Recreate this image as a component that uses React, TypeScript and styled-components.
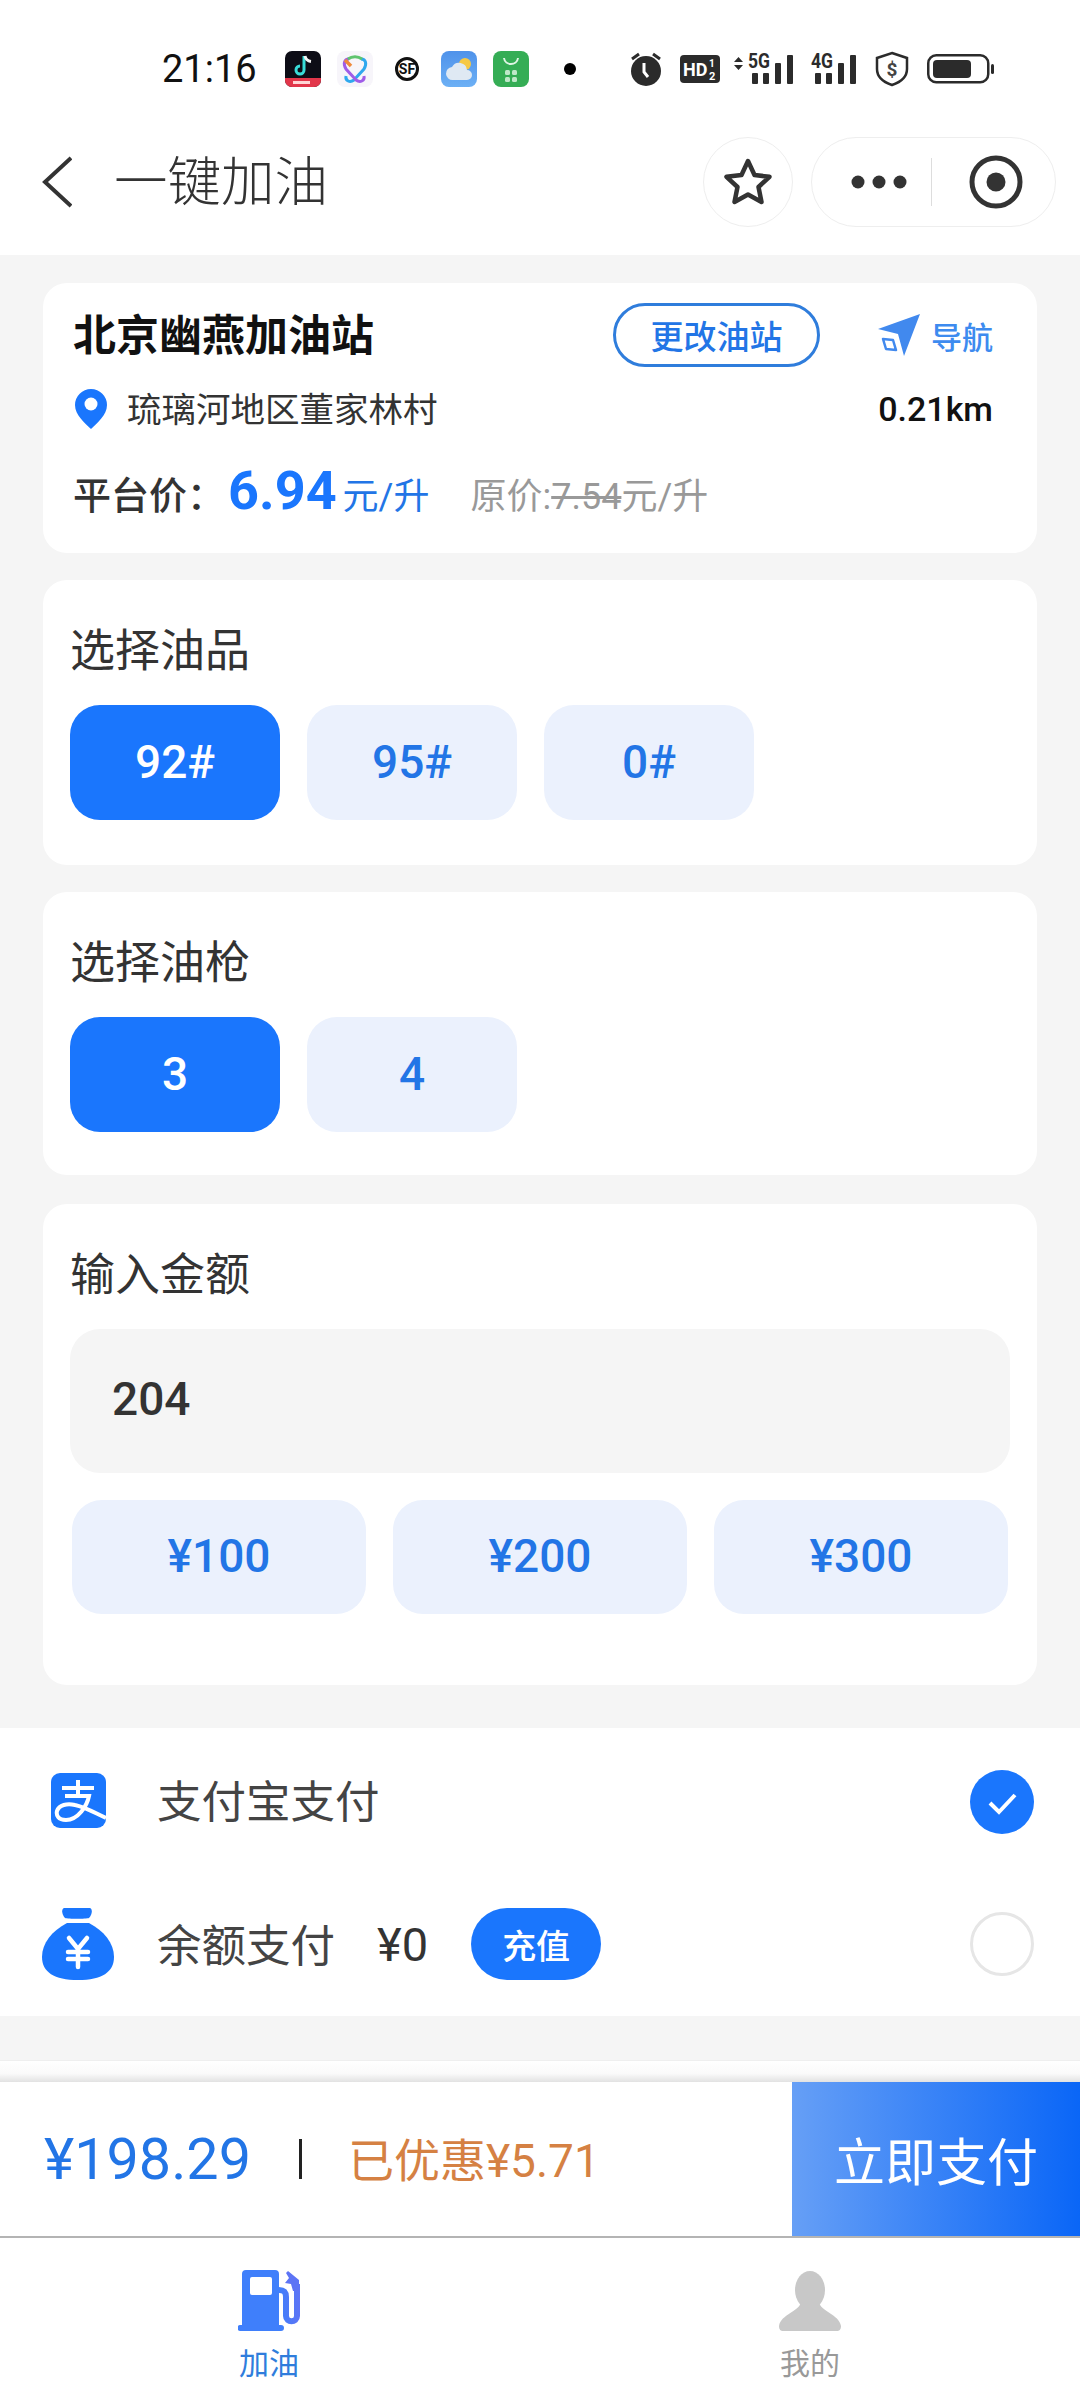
import React from "react";
import styled, { createGlobalStyle } from "styled-components";

const BLUE = "#1a76fd";
const TEXT_BLUE = "#2275e6";
const CJK = `Roboto, "Noto Sans CJK SC", sans-serif`;

const GlobalStyle = createGlobalStyle`
  html, body {
    margin: 0;
    padding: 0;
    background: #fff;
  }
  * {
    box-sizing: border-box;
  }
`;

const Page = styled.div`
  width: 1080px;
  height: 2400px;
  overflow: hidden;
  background: #fff;
  font-family: ${CJK};
  color: #333;
`;

const StatusBar = styled.div`
  height: 90px;
  padding: 54px 85px 6px 162px;
  display: flex;
  align-items: center;
`;

const Time = styled.span`
  width: 123px;
  font-size: 38px;
  line-height: 1;
  color: #111;
`;

const AppIcons = styled.div`
  display: flex;
  gap: 16px;
`;

const StatusIcons = styled.div`
  display: flex;
  align-items: center;
  margin-left: auto;
`;

const StatusIcon = styled.svg<{ $gap?: number }>`
  display: block;
  flex: none;
  margin-left: ${(p) => p.$gap ?? 0}px;
`;

const NavBar = styled.div`
  height: 165px;
  display: flex;
  align-items: center;
  padding: 18px 24px 0 42px;
`;

const NavTitle = styled.div`
  margin-left: 42px;
  padding-top: 2px;
  font-size: 53.500px;
  font-weight: 300;
  color: #333;
  line-height: 1;
`;

const NavActions = styled.div`
  margin-left: auto;
  display: flex;
  gap: 18px;
`;

const StarButton = styled.div`
  width: 90px;
  height: 90px;
  border: 1px solid #eee;
  border-radius: 50%;
  display: flex;
  align-items: center;
  justify-content: center;
`;

const Capsule = styled.div`
  width: 245px;
  height: 90px;
  border: 1px solid #eee;
  border-radius: 45px;
  display: flex;
  align-items: center;
  padding-left: 38px;
`;

const CapsuleLine = styled.div`
  width: 1px;
  height: 48px;
  background: #ddd;
  margin-left: 23px;
  margin-right: 37px;
`;

const Content = styled.div`
  background: #f5f5f5;
  padding: 28px 43px 43px;
  display: flex;
  flex-direction: column;
`;

const Card = styled.div<{ $height: number; $gapBelow?: number }>`
  height: ${(p) => p.$height}px;
  margin-bottom: ${(p) => p.$gapBelow ?? 0}px;
  background: #fff;
  border-radius: 24px;
`;

const StationCard = styled(Card)`
  padding: 20px 44px 0 30px;
`;

const NameRow = styled.div`
  display: flex;
  align-items: center;
  height: 64px;
`;

const StationName = styled.div`
  font-size: 43px;
  font-weight: 700;
  color: #111;
  padding-bottom: 6px;
`;

const ChangeButton = styled.div`
  margin-left: auto;
  width: 207px;
  height: 64px;
  border: 3px solid #2f7ddc;
  border-radius: 32px;
  color: ${TEXT_BLUE};
  font-size: 33px;
  font-weight: 500;
  display: flex;
  align-items: center;
  justify-content: center;
`;

const NavLink = styled.div`
  margin-left: 58px;
  display: flex;
  align-items: center;
  gap: 11px;
  color: #3d8bef;
  font-size: 31px;
  font-weight: 500;
`;

const AddressRow = styled.div`
  display: flex;
  align-items: center;
  height: 44px;
  margin-top: 20px;
  padding-left: 2px;
`;

const Address = styled.div`
  margin-left: 20px;
  font-size: 34.500px;
  color: #333;
  padding-bottom: 4px;
`;

const Distance = styled.div`
  margin-left: auto;
  font-size: 34px;
  font-weight: 500;
  color: #111;
`;

const PriceRow = styled.div`
  display: flex;
  align-items: baseline;
  margin-top: 28px;
  height: 60px;
`;

const PriceLabel = styled.span`
  font-size: 38px;
  font-weight: 500;
  color: #333;
  width: 155px;
`;

const PriceValue = styled.span`
  font-size: 54px;
  font-weight: 700;
  color: ${BLUE};
`;

const PriceUnit = styled.span`
  margin-left: 6px;
  font-size: 36px;
  color: ${TEXT_BLUE};
`;

const OriginalPrice = styled.span`
  margin-left: 41px;
  font-size: 36px;
  color: #999;
`;

const Struck = styled.span`
  text-decoration: line-through;
`;

const SectionCard = styled(Card)`
  padding: 44px 27px 0;
`;

const SectionTitle = styled.div`
  height: 56px;
  line-height: 56px;
  font-size: 45px;
  color: #333;
`;

const ChipRow = styled.div`
  margin-top: 25px;
  display: flex;
  gap: 27px;
`;

const Chip = styled.div<{ $active?: boolean }>`
  width: 210px;
  height: 115px;
  border-radius: 30px;
  background: ${(p) => (p.$active ? BLUE : "#ebf1fd")};
  color: ${(p) => (p.$active ? "#fff" : TEXT_BLUE)};
  font-size: 46px;
  font-weight: 500;
  padding-bottom: 2px;
  display: flex;
  align-items: center;
  justify-content: center;
`;

const AmountInput = styled.div`
  margin-top: 25px;
  height: 144px;
  background: #f5f5f5;
  border-radius: 30px;
  padding: 0 0 5px 42px;
  display: flex;
  align-items: center;
  font-size: 46px;
  font-weight: 500;
  color: #333;
`;

const AmountRow = styled.div`
  margin-top: 27px;
  padding: 0 2px;
  display: flex;
  gap: 27px;
`;

const AmountChip = styled(Chip)`
  width: 294px;
  height: 114px;
  font-size: 46px;
`;

const Payments = styled.div`
  height: 288px;
  background: #fff;
  padding: 0 46px 0 42px;
`;

const PayRow = styled.div<{ $height: number }>`
  height: ${(p) => p.$height}px;
  display: flex;
  align-items: center;
`;

const PayIconSlot = styled.div`
  width: 72px;
  display: flex;
  justify-content: center;
`;

const PayName = styled.div`
  margin-left: 43px;
  font-size: 44.500px;
  color: #444;
  padding-bottom: 4px;
`;

const Balance = styled.div`
  margin-left: 42px;
  font-size: 47px;
  color: #333;
`;

const TopUp = styled.div`
  margin-left: 43px;
  width: 130px;
  height: 72px;
  border-radius: 36px;
  background: ${BLUE};
  color: #fff;
  font-size: 34px;
  font-weight: 500;
  display: flex;
  align-items: center;
  justify-content: center;
`;

const RadioSlot = styled.div<{ $shift?: number }>`
  margin-left: auto;
  padding-top: ${(p) => p.$shift ?? 0}px;
`;

const EmptyRadio = styled.div`
  width: 64px;
  height: 64px;
  border-radius: 50%;
  border: 3px solid #e6e6e6;
`;

const GreyGap = styled.div`
  height: 44px;
  background: #f5f5f5;
`;

const ShadowStrip = styled.div`
  height: 22px;
  background: linear-gradient(#fff 0%, #fafafa 60%, #e2e2e2 100%);
  border-top: 1px solid #efefef;
`;

const PayBar = styled.div`
  height: 156px;
  border-bottom: 2px solid #b4b4b4;
  display: flex;
  align-items: center;
  padding-left: 44px;
`;

const Total = styled.div`
  font-size: 57.500px;
  color: ${TEXT_BLUE};
`;

const Divider = styled.div`
  margin-left: 48px;
  width: 3px;
  height: 40px;
  background: #222;
`;

const Discount = styled.div`
  margin-left: 46px;
  font-size: 46px;
  color: #d58143;
  padding-bottom: 4px;
`;

const PayButton = styled.div`
  margin-left: auto;
  align-self: stretch;
  width: 288px;
  background: linear-gradient(90deg, #669ff6, #0a66f7);
  color: #fff;
  font-size: 51px;
  display: flex;
  align-items: center;
  justify-content: center;
`;

const TabBar = styled.div`
  height: 160px;
  display: flex;
  padding: 32px 0 0 0;
`;

const TabItem = styled.div<{ $active?: boolean; $left: number }>`
  margin-left: ${(p) => p.$left}px;
  width: 120px;
  display: flex;
  flex-direction: column;
  align-items: center;
  color: ${(p) => (p.$active ? "#2f7ddc" : "#999")};
  font-size: 30px;
  line-height: 40px;
  gap: 12px;
`;

function AppIconSet() {
  return (
    <AppIcons>
      <svg width="36" height="36" viewBox="0 0 36 36">
        <rect width="36" height="36" rx="7" fill="#0d0d16" />
        <path d="M0 27h36v2a7 7 0 0 1-7 7H7a7 7 0 0 1-7-7z" fill="#e2364a" />
        <path d="M19 5v14a4 4 0 1 1-4-4" fill="none" stroke="#38dcd8" strokeWidth="3" />
        <path d="M20 5c.6 3 2.600 5 6 5.400" fill="none" stroke="#f3f3f3" strokeWidth="3" />
        <rect x="8" y="30" width="17" height="3" fill="#ffd5d5" />
      </svg>
      <svg width="36" height="36" viewBox="0 0 36 36">
        <rect width="36" height="36" rx="8" fill="#f7f5fa" />
        <path d="M24 8c5 0 6 5 3 10L17 29c-4 3-9 1-8-4" fill="none" stroke="#2fa8ee" strokeWidth="3" />
        <path d="M12 8C7 8 6 13 9 18l10 11c4 3 9 1 8-4" fill="none" stroke="#a05ce8" strokeWidth="3" />
        <path d="M11 8c4-3 10-3 14 0" fill="none" stroke="#5fc46e" strokeWidth="3" />
        <path d="M8 9l6 6" stroke="#f08a3c" strokeWidth="3.500" />
      </svg>
      <svg width="36" height="36" viewBox="0 0 36 36">
        <circle cx="18" cy="18" r="10.500" fill="none" stroke="#111" strokeWidth="3" />
        <text x="18" y="23" fontSize="14" fontWeight="700" textAnchor="middle" fill="#111" fontFamily="Roboto">SF</text>
      </svg>
      <svg width="36" height="36" viewBox="0 0 36 36">
        <defs>
          <linearGradient id="sky" x1="0" y1="0" x2="0" y2="1">
            <stop offset="0" stopColor="#4f92ea" />
            <stop offset="1" stopColor="#6cb0f5" />
          </linearGradient>
        </defs>
        <rect width="36" height="36" rx="8" fill="url(#sky)" />
        <circle cx="24" cy="13" r="6" fill="#f6c945" />
        <path d="M12 29a6.500 6.500 0 0 1-1-13 8 8 0 0 1 15 3 5 5 0 0 1 0 10z" fill="#dfe9f3" />
      </svg>
      <svg width="36" height="36" viewBox="0 0 36 36">
        <rect width="36" height="36" rx="8" fill="#35ad55" />
        <path d="M11 7c1 8 13 8 14 0" fill="none" stroke="#dff5e4" strokeWidth="2" />
        <rect x="12" y="19" width="5" height="5" rx="1.500" fill="#bfe8c9" />
        <rect x="19" y="19" width="5" height="5" rx="1.500" fill="#bfe8c9" />
        <rect x="12" y="26" width="5" height="5" rx="1.500" fill="#bfe8c9" />
        <rect x="19" y="26" width="5" height="5" rx="1.500" fill="#bfe8c9" />
      </svg>
      <svg width="36" height="36" viewBox="0 0 36 36">
        <circle cx="25" cy="18" r="6" fill="#000" />
      </svg>
    </AppIcons>
  );
}

function SignalBars({ x }: { x: number }) {
  return (
    <g fill="#2b2b2b">
      <rect x={x} y="20" width="6" height="11" rx="1" />
      <rect x={x + 11} y="20" width="6" height="11" rx="1" />
      <rect x={x + 23} y="10" width="6" height="21" rx="1" />
      <rect x={x + 35} y="2" width="6" height="29" rx="1" />
    </g>
  );
}

function SystemIconSet() {
  return (
    <StatusIcons>
      <StatusIcon width="32" height="34" viewBox="0 0 32 34">
        <circle cx="16" cy="19" r="15" fill="#2b2b2b" />
        <path d="M2 7l7-5M30 7l-7-5" stroke="#2b2b2b" strokeWidth="3" />
        <path d="M14 11v9l4 5" fill="none" stroke="#fff" strokeWidth="3" />
      </StatusIcon>
      <StatusIcon $gap={18} width="40" height="28" viewBox="0 0 40 28">
        <rect width="40" height="28" rx="4" fill="#2b2b2b" />
        <text x="3" y="21" fontSize="18" fontWeight="700" fill="#fff" fontFamily="Roboto">HD</text>
        <text x="29" y="12" fontSize="10" fontWeight="700" fill="#fff" fontFamily="Roboto">1</text>
        <text x="29" y="25" fontSize="11" fontWeight="700" fill="#fff" fontFamily="Roboto">2</text>
      </StatusIcon>
      <StatusIcon $gap={13} width="62" height="44" viewBox="0 -6 62 44">
        <path d="M1 9l4.500-5 4.500 5zM1 12l4.500 5 4.500-5z" fill="#2b2b2b" />
        <text x="15" y="15" fontSize="20" fontWeight="700" fill="#2b2b2b" fontFamily="Roboto" textLength="22" lengthAdjust="spacingAndGlyphs">5G</text>
        <SignalBars x={19} />
      </StatusIcon>
      <StatusIcon $gap={15} width="48" height="44" viewBox="0 -6 48 44">
        <text x="1" y="15" fontSize="20" fontWeight="700" fill="#2b2b2b" fontFamily="Roboto" textLength="22" lengthAdjust="spacingAndGlyphs">4G</text>
        <SignalBars x={5} />
      </StatusIcon>
      <StatusIcon $gap={17} width="34" height="36" viewBox="0 0 34 36">
        <path d="M17 2l15 5v11c0 8-6 13-15 16C8 31 2 26 2 18V7z" fill="none" stroke="#2b2b2b" strokeWidth="2.500" />
        <text x="17" y="25" fontSize="19" fontWeight="700" textAnchor="middle" fill="#444" fontFamily="Roboto">$</text>
      </StatusIcon>
      <StatusIcon $gap={18} width="68" height="30" viewBox="0 0 68 30">
        <rect x="1.250" y="1.250" width="60" height="27" rx="8" fill="none" stroke="#2b2b2b" strokeWidth="2.500" />
        <rect x="6" y="6" width="38" height="18" rx="4" fill="#2b2b2b" />
        <rect x="64" y="10" width="3" height="10" rx="1.500" fill="#2b2b2b" />
      </StatusIcon>
    </StatusIcons>
  );
}

function PayIconAlipay() {
  return (
    <svg width="55" height="55" viewBox="0 0 55 55">
      <rect width="55" height="55" rx="9" fill={BLUE} />
      <path d="M11 15h32M27 7v15M14 23h24C36 33 27 47 15 47 7 47 5 42 6 38c2-6 10-8 18-6 10 2 20 8 31 13" fill="none" stroke="#fff" strokeWidth="4" />
    </svg>
  );
}

function PayIconBag() {
  return (
    <svg width="72" height="72" viewBox="0 0 72 72">
      <path d="M22 0c6-1 20-1 26 0 3 1 2 7-1 10-3 1-21 1-24 0-3-3-4-9-1-10z" fill={BLUE} />
      <path d="M25 15h22c15 8 25 20 25 34 0 15-12 23-36 23S0 64 0 49c0-14 10-26 25-34z" fill={BLUE} />
      <path d="M27 30l9 11 9-11M26 44h20M26 51h20M36 41v18" fill="none" stroke="#fff" strokeWidth="4.500" strokeLinecap="round" />
    </svg>
  );
}

export default function App() {
  return (
    <Page>
      <GlobalStyle />
      <StatusBar>
        <Time>21:16</Time>
        <AppIconSet />
        <SystemIconSet />
      </StatusBar>

      <NavBar>
        <svg width="30" height="52" viewBox="0 0 30 52">
          <path d="M29 2L3 26l26 24" fill="none" stroke="#333" strokeWidth="4" />
        </svg>
        <NavTitle>一键加油</NavTitle>
        <NavActions>
          <StarButton>
            <svg width="50" height="50" viewBox="0 0 50 50">
              <path d="M25 4l6.500 14 15 1.800-11 10.200 3 15L25 37.500 11.500 45l3-15-11-10.200 15-1.800z" fill="none" stroke="#333" strokeWidth="4.500" strokeLinejoin="round" />
            </svg>
          </StarButton>
          <Capsule>
            <svg width="58" height="16" viewBox="0 0 58 16">
              <circle cx="8" cy="8" r="6.500" fill="#333" />
              <circle cx="29" cy="8" r="6.500" fill="#333" />
              <circle cx="50" cy="8" r="6.500" fill="#333" />
            </svg>
            <CapsuleLine />
            <svg width="54" height="54" viewBox="0 0 54 54">
              <circle cx="27" cy="27" r="24" fill="none" stroke="#333" strokeWidth="5" />
              <circle cx="27" cy="27" r="9.500" fill="#333" />
            </svg>
          </Capsule>
        </NavActions>
      </NavBar>

      <Content>
        <StationCard $height={270} $gapBelow={27}>
          <NameRow>
            <StationName>北京幽燕加油站</StationName>
            <ChangeButton>更改油站</ChangeButton>
            <NavLink>
              <svg width="42" height="42" viewBox="0 0 42 42">
                <path d="M42 0L0 15l20 5 6 22z" fill="#4189ee" />
                <path d="M5 25l10 1 3 10-10-1z" fill="none" stroke="#4189ee" strokeWidth="2.500" strokeLinejoin="round" />
              </svg>
              导航
            </NavLink>
          </NameRow>
          <AddressRow>
            <svg width="32" height="40" viewBox="0 0 32 40">
              <path d="M16 0a16 16 0 0 1 16 16c0 10-10 18-16 24C10 34 0 26 0 16A16 16 0 0 1 16 0z" fill={BLUE} />
              <circle cx="16" cy="15" r="6.500" fill="#fff" />
            </svg>
            <Address>琉璃河地区董家林村</Address>
            <Distance>0.21km</Distance>
          </AddressRow>
          <PriceRow>
            <PriceLabel>平台价：</PriceLabel>
            <PriceValue>6.94</PriceValue>
            <PriceUnit>元/升</PriceUnit>
            <OriginalPrice>
              原价:<Struck>7.54</Struck>元/升
            </OriginalPrice>
          </PriceRow>
        </StationCard>

        <SectionCard $height={285} $gapBelow={27}>
          <SectionTitle>选择油品</SectionTitle>
          <ChipRow>
            <Chip $active>92#</Chip>
            <Chip>95#</Chip>
            <Chip>0#</Chip>
          </ChipRow>
        </SectionCard>

        <SectionCard $height={283} $gapBelow={29}>
          <SectionTitle>选择油枪</SectionTitle>
          <ChipRow>
            <Chip $active>3</Chip>
            <Chip>4</Chip>
          </ChipRow>
        </SectionCard>

        <SectionCard $height={481}>
          <SectionTitle>输入金额</SectionTitle>
          <AmountInput>204</AmountInput>
          <AmountRow>
            <AmountChip>¥100</AmountChip>
            <AmountChip>¥200</AmountChip>
            <AmountChip>¥300</AmountChip>
          </AmountRow>
        </SectionCard>
      </Content>

      <Payments>
        <PayRow $height={144}>
          <PayIconSlot>
            <PayIconAlipay />
          </PayIconSlot>
          <PayName>支付宝支付</PayName>
          <RadioSlot $shift={3}>
            <svg width="64" height="64" viewBox="0 0 64 64" display="block">
              <circle cx="32" cy="32" r="32" fill={BLUE} />
              <path d="M20 33l9 9 16-17" fill="none" stroke="#fff" strokeWidth="4" />
            </svg>
          </RadioSlot>
        </PayRow>
        <PayRow $height={144}>
          <PayIconSlot>
            <PayIconBag />
          </PayIconSlot>
          <PayName>余额支付</PayName>
          <Balance>¥0</Balance>
          <TopUp>充值</TopUp>
          <RadioSlot>
            <EmptyRadio />
          </RadioSlot>
        </PayRow>
      </Payments>

      <GreyGap />
      <ShadowStrip />

      <PayBar>
        <Total>¥198.29</Total>
        <Divider />
        <Discount>已优惠¥5.71</Discount>
        <PayButton>立即支付</PayButton>
      </PayBar>

      <TabBar>
        <TabItem $active $left={209}>
          <svg width="62" height="62" viewBox="0 0 62 62">
            <defs>
              <linearGradient id="fuel" gradientUnits="userSpaceOnUse" x1="40" y1="0" x2="62" y2="0">
                <stop offset="0" stopColor="#3f7ffb" />
                <stop offset="1" stopColor="#5d74f5" />
              </linearGradient>
            </defs>
            <path d="M4 4a4 4 0 0 1 4-4h29a4 4 0 0 1 4 4v51h2a3 3 0 0 1 0 6H3a3 3 0 0 1-1-6h2z" fill="#3f7ffb" />
            <rect x="12" y="7" width="22" height="18" rx="2" fill="#fff" />
            <path d="M41 20c5 0 7 2 7 7v19c0 7 11 7 11 0V14" fill="none" stroke="url(#fuel)" strokeWidth="6" strokeLinejoin="round" />
            <path d="M50 1l11 9v11h-6l-2-7-6-1 4-5-3-5z" fill="#5d74f5" />
          </svg>
          加油
        </TabItem>
        <TabItem $left={421}>
          <svg width="62" height="62" viewBox="0 0 62 62">
            <ellipse cx="31" cy="20" rx="15" ry="19" fill="#c8c8c8" />
            <path d="M22 32C20 42 2 44 0 56c0 4 2 5 4 5h54c2 0 4-1 4-5-2-12-20-14-22-24z" fill="#c8c8c8" />
          </svg>
          我的
        </TabItem>
      </TabBar>
    </Page>
  );
}
